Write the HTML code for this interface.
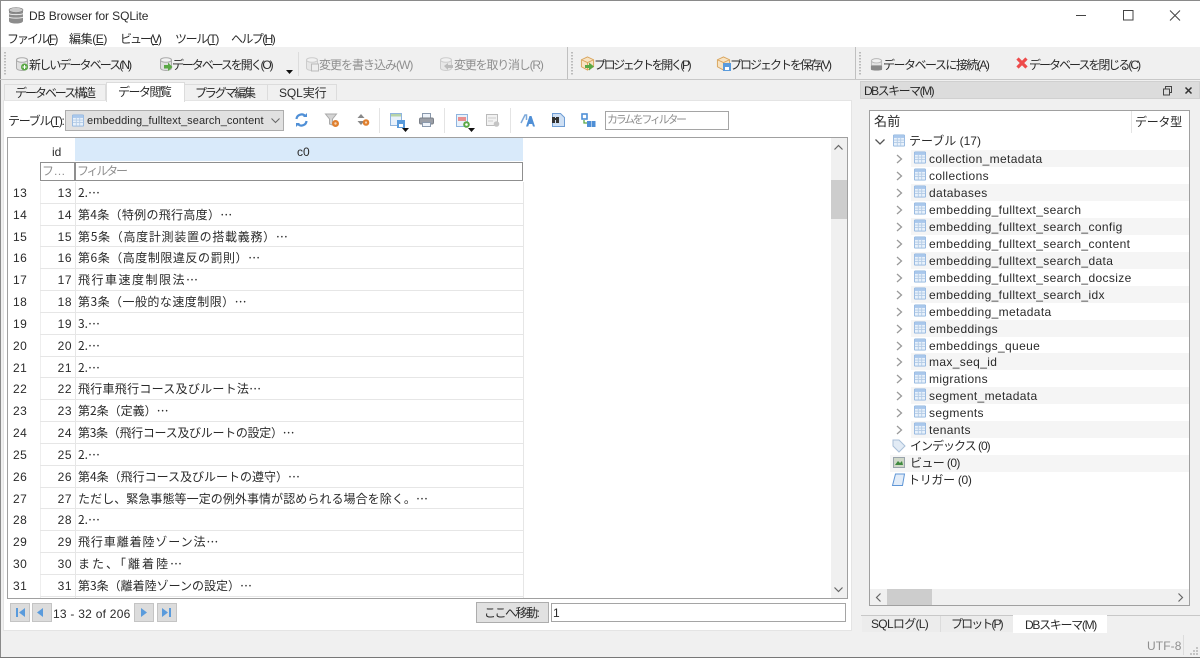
<!DOCTYPE html>
<html lang="ja"><head><meta charset="utf-8"><title>DB Browser for SQLite</title>
<style>
*{box-sizing:border-box}
html,body{margin:0;padding:0}
html{background:#f0f0f0}
body{width:1200px;height:658px;overflow:hidden;position:relative;background:#f0f0f0;font:12px/16px "Liberation Sans","Noto Sans CJK JP",sans-serif;color:#2a2a2a;filter:blur(.3px)}
.a{position:absolute}
.t{position:absolute;white-space:nowrap;line-height:16px}
u{text-underline-offset:1px}
svg{position:absolute;overflow:visible}
.g{color:#8f8f8f}
.r{height:21.84px;position:relative;border-bottom:1px solid #e6e6e6;margin-left:32px;width:484px}
.r b{font-weight:400;position:absolute;left:-27px;top:3px;letter-spacing:.5px}
.r i{font-style:normal;position:absolute;left:0;width:32px;text-align:right;top:3px;letter-spacing:.5px}
.r span{position:absolute;left:38px;top:3px;white-space:nowrap;font-family:"Noto Sans CJK JP",sans-serif}
.tr{position:absolute;left:0;width:100%;height:17px;white-space:nowrap;letter-spacing:.36px;line-height:17px}
.tr.o::before{content:"";position:absolute;left:41px;right:0;top:0;bottom:0;background:#f5f5f5}
.tr span{position:absolute;left:59px;top:1px}
.tr svg.c{left:26px;top:4px}
.tr svg.i{left:44px;top:1px}
.sep{position:absolute;width:1px;background:#dcdcdc}
</style></head><body>
<svg width="0" height="0" style="position:absolute"><defs>
<symbol id="tb" viewBox="0 0 14 14"><rect x=".5" y=".5" width="13" height="13" rx="1" fill="#e8f1fb" stroke="#8fb4de"/><rect x="1" y="1" width="12" height="3" fill="#a9c8ec"/><path d="M1 6.500h12M1 9.200h12M5 4v9M9 4v9" stroke="#b3cbe6" fill="none"/></symbol>
<symbol id="ch" viewBox="0 0 7 10"><path d="M1 1l4.500 4-4.500 4" fill="none" stroke="#9a9a9a" stroke-width="1.300"/></symbol>
<symbol id="db" viewBox="0 0 14 14"><path d="M1.500 3v8c0 1.500 2.500 2.500 5.500 2.500s5.500-1 5.500-2.500V3z" fill="#e0e0e0" stroke="#aaa"/><ellipse cx="7" cy="3" rx="5.500" ry="2.300" fill="#f2f2f2" stroke="#aaa"/></symbol>
<symbol id="box" viewBox="0 0 16 16"><path d="M8 1l6.500 3v7.500L8 15 1.500 11.500V4z" fill="#f7e3c3" stroke="#d9a45c"/><path d="M1.500 4L8 7l6.500-3M8 7v8" fill="none" stroke="#d9a45c"/></symbol>
</defs></svg>

<!-- window frame -->
<div class="a" style="left:0;top:0;width:1200px;height:47px;background:#fff"></div>
<div class="a" style="left:0;top:0;width:1200px;height:1px;background:#8a8a8a"></div>
<div class="a" style="left:0;top:0;width:1px;height:658px;background:#8a8a8a"></div>
<div class="a" style="left:0;top:657px;width:1200px;height:1px;background:#777"></div>

<!-- title -->
<svg style="left:8px;top:7px" width="16" height="17" viewBox="0 0 16 17"><path d="M1 3v11c0 1.500 3 2.500 7 2.500s7-1 7-2.500V3z" fill="#8c8c8c"/><path d="M1 6.500c1 1.500 13 1.500 14 0M1 10c1 1.500 13 1.500 14 0" stroke="#eee" fill="none"/><ellipse cx="8" cy="3" rx="7" ry="2.500" fill="#c9c9c9" stroke="#777" stroke-width=".6"/></svg>
<div class="t" style="left:29px;top:8px;font-size:12px;letter-spacing:-.1px">DB Browser for SQLite</div>
<svg style="left:1076px;top:10px" width="112" height="12" viewBox="0 0 112 12"><path d="M0 5.500h10" stroke="#444"/><rect x="47.500" y=".5" width="9.500" height="9.500" fill="none" stroke="#444"/><path d="M94 .5l10 10M104 .5l-10 10" stroke="#444"/></svg>

<!-- menu -->
<div class="t" style="left:7px;top:31px;letter-spacing:-2px">ファイル(<u>F</u>)</div>
<div class="t" style="left:69px;top:31px;letter-spacing:-.4px">編集(<u>E</u>)</div>
<div class="t" style="left:120px;top:31px;letter-spacing:-2px">ビュー(<u>V</u>)</div>
<div class="t" style="left:175px;top:31px;letter-spacing:-1.4px">ツール(<u>T</u>)</div>
<div class="t" style="left:231px;top:31px;letter-spacing:-1.6px">ヘルプ(<u>H</u>)</div>

<!-- toolbar -->
<div class="a" style="left:0;top:79px;width:1200px;height:1px;background:#c8c8c8"></div>
<div class="a" style="left:4px;top:52px;width:2px;height:24px;background-image:linear-gradient(#bbb 50%,transparent 50%);background-size:2px 3px"></div>
<div class="sep" style="left:298px;top:52px;height:24px"></div>
<div class="sep" style="left:567px;top:47px;height:32px;background:#c0c0c0"></div>
<div class="a" style="left:571px;top:52px;width:2px;height:24px;background-image:linear-gradient(#bbb 50%,transparent 50%);background-size:2px 3px"></div>
<div class="sep" style="left:855px;top:47px;height:32px;background:#c0c0c0"></div>
<div class="a" style="left:859px;top:52px;width:2px;height:24px;background-image:linear-gradient(#bbb 50%,transparent 50%);background-size:2px 3px"></div>

<svg style="left:15px;top:57px" width="14" height="14"><use href="#db"/><circle cx="9.500" cy="10" r="3.500" fill="#5aa845"/><path d="M7.500 10h4M9.500 8v4" stroke="#fff"/></svg>
<div class="t" style="left:29px;top:57px;letter-spacing:-1.9px">新しいデータベース(N)</div>
<svg style="left:159px;top:57px" width="14" height="14"><use href="#db"/><path d="M5 8h4V5.500L13.500 10 9 14v-2.500H5z" fill="#5aa845"/></svg>
<div class="t" style="left:172px;top:57px;letter-spacing:-2.1px">データベースを開く(O)</div>
<svg style="left:286px;top:70px" width="7" height="5"><path d="M0 0h7L3.500 4z" fill="#111"/></svg>
<svg style="left:305px;top:57px;opacity:.5" width="14" height="14"><use href="#db"/><rect x="6.500" y="7" width="7" height="7" fill="#eee" stroke="#888"/></svg>
<div class="t g" style="left:319px;top:57px;letter-spacing:-1px">変更を書き込み(W)</div>
<svg style="left:439px;top:57px;opacity:.5" width="14" height="14"><use href="#db"/><path d="M5 9l4-3v2h5v3H9v2z" fill="#888"/></svg>
<div class="t g" style="left:454px;top:57px;letter-spacing:-1.2px">変更を取り消し(R)</div>
<svg style="left:580px;top:56px" width="15" height="15"><use href="#box"/><path d="M5 9h4V6.500L14 10.500 9 14.500V12H5z" fill="#5aa845"/></svg>
<div class="t" style="left:594px;top:57px;letter-spacing:-2.4px">プロジェクトを開く(P)</div>
<svg style="left:716px;top:56px" width="15" height="15"><use href="#box"/><rect x="7" y="7" width="8" height="8" fill="#5a9bdc"/><rect x="9" y="11" width="4" height="3" fill="#fff"/></svg>
<div class="t" style="left:730px;top:57px;letter-spacing:-2px">プロジェクトを保存(V)</div>
<svg style="left:870px;top:58px" width="13" height="13" viewBox="0 0 14 14"><use href="#db" opacity=".8"/><rect x="1" y="8" width="12" height="5" rx="1" fill="#888"/></svg>
<div class="t" style="left:883px;top:57px;letter-spacing:-1.5px">データベースに接続(A)</div>
<svg style="left:1016px;top:57px" width="12" height="12"><path d="M1.500 1.500l9 9M10.500 1.500l-9 9" stroke="#ee4b4b" stroke-width="3.200"/></svg>
<div class="t" style="left:1029px;top:57px;letter-spacing:-2px">データベースを閉じる(C)</div>

<!-- main tabs -->
<div class="a" style="left:4px;top:84px;width:102px;height:17px;background:#f0f0f0;border:1px solid #dcdcdc"></div>
<div class="a" style="left:184px;top:84px;width:84px;height:17px;background:#f0f0f0;border:1px solid #dcdcdc"></div>
<div class="a" style="left:267px;top:84px;width:70px;height:17px;background:#f0f0f0;border:1px solid #dcdcdc"></div>
<div class="a" style="left:3px;top:100px;width:849px;height:531px;background:#fff;border:1px solid #e4e4e4"></div>
<div class="a" style="left:106px;top:82px;width:79px;height:20px;background:#fff;border:1px solid #dcdcdc;border-bottom:0"></div>
<div class="t" style="left:15px;top:85px;letter-spacing:-2.05px">データベース構造</div>
<div class="t" style="left:118px;top:84px;letter-spacing:-1.55px">データ閲覧</div>
<div class="t" style="left:195px;top:85px;letter-spacing:-2.2px">プラグマ編集</div>
<div class="t" style="left:279px;top:85px;letter-spacing:-.1px">SQL実行</div>

<!-- table toolbar -->
<div class="t" style="left:8px;top:113px;letter-spacing:-1.3px">テーブル(<u>T</u>):</div>
<div class="a" style="left:65px;top:110px;width:219px;height:21px;background:#e1e1e1;border:1px solid #adadad"></div>
<svg style="left:72px;top:114px" width="12" height="13"><use href="#tb" width="12" height="13"/></svg>
<div class="t" style="left:87px;top:113px;font-size:11px;letter-spacing:.09px">embedding_fulltext_search_content</div>
<svg style="left:271px;top:118px" width="9" height="5"><path d="M.5.5l4 4 4-4" fill="none" stroke="#666"/></svg>

<svg style="left:295px;top:113px" width="13" height="14" viewBox="0 0 13 14"><path d="M1.500 6a5 5 0 0 1 9-2.500M11.500 8a5 5 0 0 1-9 2.500" fill="none" stroke="#4f8fd6" stroke-width="2.200"/><path d="M8 4h4V0zM5 10H1v4z" fill="#4f8fd6"/></svg>
<svg style="left:325px;top:113px" width="15" height="15" viewBox="0 0 15 15"><path d="M.5 1h11L7.500 6v6l-3-1V6z" fill="#d4d4d4" stroke="#aaa"/><circle cx="10.500" cy="10.500" r="3.500" fill="#e08030"/><circle cx="10.500" cy="10.500" r="1.200" fill="#f5d5b5"/></svg>
<svg style="left:356px;top:114px" width="14" height="14" viewBox="0 0 14 14"><path d="M5 0l3.500 4h-7zM5 11L1.500 7h7z" fill="#888"/><circle cx="10" cy="8.500" r="3.300" fill="#e08030"/><circle cx="10" cy="8.500" r="1.100" fill="#f5d5b5"/></svg>
<div class="sep" style="left:379px;top:108px;height:25px;background:#e4e4e4"></div>
<svg style="left:390px;top:113px" width="15" height="15" viewBox="0 0 15 15"><rect x=".5" y=".5" width="11" height="12" fill="#e8f1fb" stroke="#8fb4de"/><rect x="1" y="1" width="10" height="2.500" fill="#b6d3a8"/><rect x="7" y="7" width="8" height="8" fill="#5a9bdc"/><rect x="9" y="11" width="4" height="3" fill="#fff"/></svg>
<svg style="left:402px;top:128px" width="7" height="4"><path d="M0 0h7L3.500 4z" fill="#111"/></svg>
<svg style="left:419px;top:113px" width="15" height="14" viewBox="0 0 15 14"><rect x="3.500" y=".5" width="8" height="5" fill="#eef3fa" stroke="#8a99ad"/><rect x=".5" y="5" width="14" height="6" rx="1.500" fill="#9a9ea6" stroke="#7b8088"/><rect x="3.500" y="9.500" width="8" height="4" fill="#eef3fa" stroke="#8a99ad"/></svg>
<div class="sep" style="left:444px;top:108px;height:25px;background:#e4e4e4"></div>
<svg style="left:456px;top:114px" width="15" height="15" viewBox="0 0 15 15"><rect x=".5" y=".5" width="11" height="12" fill="#e8f1fb" stroke="#8fb4de"/><rect x="2" y="3" width="8" height="4" fill="#e98f8f"/><circle cx="10.500" cy="10.500" r="3.300" fill="#5aa845"/><circle cx="10.500" cy="10.500" r="1.300" fill="#fff"/></svg>
<svg style="left:468px;top:128px" width="7" height="4"><path d="M0 0h7L3.500 4z" fill="#111"/></svg>
<svg style="left:486px;top:114px" width="14" height="14" viewBox="0 0 14 14"><rect x=".5" y=".5" width="11" height="11" fill="#f2f2f2" stroke="#bbb"/><path d="M2 4h8M2 7h5" stroke="#ccc"/><circle cx="10.500" cy="10" r="2.800" fill="#c4c4c4"/></svg>
<div class="sep" style="left:510px;top:108px;height:25px;background:#e4e4e4"></div>
<svg style="left:521px;top:114px" width="14" height="13" viewBox="0 0 14 13"><path d="M0 9L4 1h1.500v5" fill="none" stroke="#7da9da" stroke-width="1.500"/><path d="M5 12.500L8.500 2h2l3.500 10.500h-2l-.8-2.500H8l-.8 2.500z" fill="#4f8fd6"/></svg>
<svg style="left:551px;top:113px" width="14" height="14" viewBox="0 0 14 14"><path d="M1.500.5h8l4 4v9h-12z" fill="#cfe0f4" stroke="#6e9dd4"/><rect x="1" y="4" width="3" height="6" fill="#333"/><rect x="5" y="4" width="3" height="6" fill="#333"/><rect x="3.500" y="5" width="2" height="2" fill="#333"/></svg>
<svg style="left:581px;top:113px" width="15" height="15" viewBox="0 0 15 15"><rect x="1" y="1" width="5" height="5" fill="none" stroke="#4f8fd6" stroke-width="1.600"/><rect x="6" y="8" width="4" height="6" fill="#4f8fd6"/><rect x="10.500" y="8" width="4" height="6" fill="#4f8fd6"/><path d="M3 7v3h3" fill="none" stroke="#5aa845" stroke-width="1.300"/></svg>
<div class="a" style="left:605px;top:111px;width:124px;height:19px;background:#fff;border:1px solid #a5a5a5"></div>
<div class="t g" style="left:607px;top:112px;font-size:11px;letter-spacing:-2.3px">カラムをフィルター</div>

<!-- data table -->
<div class="a" style="left:7px;top:137px;width:841px;height:462px;background:#fff;border:1px solid #a0a0a0;overflow:hidden">
 <div class="a" style="left:67px;top:0;width:448px;height:23px;background:#d9eafa"></div>
 <div class="t" style="left:44px;top:6px">id</div>
 <div class="t" style="left:289px;top:6px">c0</div>
 <div class="a" style="left:32px;top:24px;width:35px;height:19px;border:1px solid #8f8f8f"></div>
 <div class="a" style="left:67px;top:24px;width:448px;height:19px;border:1px solid #8f8f8f"></div>
 <div class="t g" style="left:34px;top:25px;letter-spacing:-.5px">フ…</div>
 <div class="t g" style="left:69px;top:25px;letter-spacing:-2.2px">フィルター</div>
 <div class="a" style="left:32px;top:44px;width:1px;height:420px;background:#eee"></div>
 <div class="a" style="left:67px;top:44px;width:1px;height:420px;background:#e6e6e6"></div>
 <div class="a" style="left:515px;top:44px;width:1px;height:420px;background:#e6e6e6"></div>
 <div class="a" style="left:0;top:44px;width:520px">
  <div class="r"><b>13</b><i>13</i><span>2.…</span></div>
  <div class="r"><b>14</b><i>14</i><span style="letter-spacing:.3px">第4条（特例の飛行高度）…</span></div>
  <div class="r"><b>15</b><i>15</i><span style="letter-spacing:.7px">第5条（高度計測装置の搭載義務）…</span></div>
  <div class="r"><b>16</b><i>16</i><span style="letter-spacing:.53px">第6条（高度制限違反の罰則）…</span></div>
  <div class="r"><b>17</b><i>17</i><span style="letter-spacing:1.5px">飛行車速度制限法…</span></div>
  <div class="r"><b>18</b><i>18</i><span style="letter-spacing:.46px">第3条（一般的な速度制限）…</span></div>
  <div class="r"><b>19</b><i>19</i><span>3.…</span></div>
  <div class="r"><b>20</b><i>20</i><span>2.…</span></div>
  <div class="r"><b>21</b><i>21</i><span>2.…</span></div>
  <div class="r"><b>22</b><i>22</i><span style="letter-spacing:.27px">飛行車飛行コース及びルート法…</span></div>
  <div class="r"><b>23</b><i>23</i><span>第2条（定義）…</span></div>
  <div class="r"><b>24</b><i>24</i><span style="letter-spacing:-.3px">第3条（飛行コース及びルートの設定）…</span></div>
  <div class="r"><b>25</b><i>25</i><span>2.…</span></div>
  <div class="r"><b>26</b><i>26</i><span>第4条（飛行コース及びルートの遵守）…</span></div>
  <div class="r"><b>27</b><i>27</i><span style="letter-spacing:.07px">ただし、緊急事態等一定の例外事情が認められる場合を除く。…</span></div>
  <div class="r"><b>28</b><i>28</i><span>2.…</span></div>
  <div class="r"><b>29</b><i>29</i><span style="letter-spacing:.9px">飛行車離着陸ゾーン法…</span></div>
  <div class="r"><b>30</b><i>30</i><span style="letter-spacing:2px">また、「離着陸…</span></div>
  <div class="r"><b>31</b><i>31</i><span>第3条（離着陸ゾーンの設定）…</span></div>
 </div>
 <div class="a" style="left:823px;top:0;width:16px;height:460px;background:#f0f0f0"></div>
 <div class="a" style="left:823px;top:42px;width:16px;height:39px;background:#cdcdcd"></div>
 <svg style="left:826px;top:7px" width="9" height="5"><path d="M.5 4.500l4-4 4 4" fill="none" stroke="#666" stroke-width="1.200"/></svg>
 <svg style="left:826px;top:449px" width="9" height="5"><path d="M.5.5l4 4 4-4" fill="none" stroke="#666" stroke-width="1.200"/></svg>
</div>

<!-- nav -->
<div class="a" style="left:10px;top:603px;width:20px;height:19px;background:#dcdcdc;border:1px solid #c4c4c4"></div>
<div class="a" style="left:32px;top:603px;width:20px;height:19px;background:#dcdcdc;border:1px solid #c4c4c4"></div>
<div class="a" style="left:134px;top:603px;width:20px;height:19px;background:#dcdcdc;border:1px solid #c4c4c4"></div>
<div class="a" style="left:157px;top:603px;width:20px;height:19px;background:#dcdcdc;border:1px solid #c4c4c4"></div>
<svg style="left:14px;top:607px" width="160" height="11" viewBox="0 0 160 11"><path d="M2 1h2v9H2zM11 1v9L5 5.500z" fill="#5a9bdc"/><path d="M29 1v9l-6-4.500z" fill="#5a9bdc"/><path d="M127 1v9l6-4.500z" fill="#5a9bdc"/><path d="M148 1v9l6-4.500zM155 1h2v9h-2z" fill="#5a9bdc"/></svg>
<div class="t" style="left:53px;top:606px;letter-spacing:.25px">13 - 32 of 206</div>
<div class="a" style="left:476px;top:602px;width:73px;height:21px;background:#e1e1e1;border:1px solid #adadad"></div>
<div class="t" style="left:484px;top:605px;letter-spacing:-1.5px">ここへ移動:</div>
<div class="a" style="left:551px;top:603px;width:295px;height:19px;background:#fff;border:1px solid #a5a5a5"></div>
<div class="t" style="left:553px;top:605px">1</div>

<!-- dock title -->
<div class="a" style="left:860px;top:81px;width:340px;height:18px;background:#dcdcdc;border:1px solid #d0d0d0"></div>
<div class="t" style="left:864px;top:83px;letter-spacing:-1.5px">DBスキーマ(M)</div>
<svg style="left:1163px;top:86px" width="32" height="10" viewBox="0 0 32 10"><rect x="2.500" y=".5" width="6" height="6" fill="none" stroke="#444"/><rect x=".5" y="3" width="6" height="6" fill="#dcdcdc" stroke="#444"/><path d="M22.500 1.500l6 6M28.500 1.500l-6 6" stroke="#333" stroke-width="1.500"/></svg>

<!-- tree -->
<div class="a" style="left:869px;top:110px;width:321px;height:496px;background:#fff;border:1px solid #a0a0a0;overflow:hidden">
 <div class="t" style="left:4px;top:3px;font-size:13px;letter-spacing:.3px">名前</div>
 <div class="a" style="left:261px;top:0;width:1px;height:22px;background:#e4e4e4"></div>
 <div class="t" style="left:265px;top:3px;letter-spacing:-.3px">データ型</div>
 <div class="a" style="left:0;top:22px;width:319px;height:456px">
  <div class="tr" style="top:0;letter-spacing:0"><svg style="left:5px;top:6px" width="10" height="6"><path d="M.5.500l4.500 4.500 4.500-4.500" fill="none" stroke="#555" stroke-width="1.300"/></svg><svg class="i" style="left:23px" width="12" height="13"><use href="#tb" width="12" height="13"/></svg><span style="left:39px;top:0">テーブル (17)</span></div>
  <div class="tr o" style="top:17px"><svg class="c" width="7" height="10"><use href="#ch"/></svg><svg class="i" width="12" height="13"><use href="#tb" width="12" height="13"/></svg><span>collection_metadata</span></div>
  <div class="tr" style="top:34px"><svg class="c" width="7" height="10"><use href="#ch"/></svg><svg class="i" width="12" height="13"><use href="#tb" width="12" height="13"/></svg><span>collections</span></div>
  <div class="tr o" style="top:51px"><svg class="c" width="7" height="10"><use href="#ch"/></svg><svg class="i" width="12" height="13"><use href="#tb" width="12" height="13"/></svg><span>databases</span></div>
  <div class="tr" style="top:68px"><svg class="c" width="7" height="10"><use href="#ch"/></svg><svg class="i" width="12" height="13"><use href="#tb" width="12" height="13"/></svg><span>embedding_fulltext_search</span></div>
  <div class="tr o" style="top:85px"><svg class="c" width="7" height="10"><use href="#ch"/></svg><svg class="i" width="12" height="13"><use href="#tb" width="12" height="13"/></svg><span>embedding_fulltext_search_config</span></div>
  <div class="tr" style="top:102px"><svg class="c" width="7" height="10"><use href="#ch"/></svg><svg class="i" width="12" height="13"><use href="#tb" width="12" height="13"/></svg><span>embedding_fulltext_search_content</span></div>
  <div class="tr o" style="top:119px"><svg class="c" width="7" height="10"><use href="#ch"/></svg><svg class="i" width="12" height="13"><use href="#tb" width="12" height="13"/></svg><span>embedding_fulltext_search_data</span></div>
  <div class="tr" style="top:136px"><svg class="c" width="7" height="10"><use href="#ch"/></svg><svg class="i" width="12" height="13"><use href="#tb" width="12" height="13"/></svg><span>embedding_fulltext_search_docsize</span></div>
  <div class="tr o" style="top:153px"><svg class="c" width="7" height="10"><use href="#ch"/></svg><svg class="i" width="12" height="13"><use href="#tb" width="12" height="13"/></svg><span>embedding_fulltext_search_idx</span></div>
  <div class="tr" style="top:170px"><svg class="c" width="7" height="10"><use href="#ch"/></svg><svg class="i" width="12" height="13"><use href="#tb" width="12" height="13"/></svg><span>embedding_metadata</span></div>
  <div class="tr o" style="top:187px"><svg class="c" width="7" height="10"><use href="#ch"/></svg><svg class="i" width="12" height="13"><use href="#tb" width="12" height="13"/></svg><span>embeddings</span></div>
  <div class="tr" style="top:204px"><svg class="c" width="7" height="10"><use href="#ch"/></svg><svg class="i" width="12" height="13"><use href="#tb" width="12" height="13"/></svg><span>embeddings_queue</span></div>
  <div class="tr o" style="top:220px"><svg class="c" width="7" height="10"><use href="#ch"/></svg><svg class="i" width="12" height="13"><use href="#tb" width="12" height="13"/></svg><span>max_seq_id</span></div>
  <div class="tr" style="top:237px"><svg class="c" width="7" height="10"><use href="#ch"/></svg><svg class="i" width="12" height="13"><use href="#tb" width="12" height="13"/></svg><span>migrations</span></div>
  <div class="tr o" style="top:254px"><svg class="c" width="7" height="10"><use href="#ch"/></svg><svg class="i" width="12" height="13"><use href="#tb" width="12" height="13"/></svg><span>segment_metadata</span></div>
  <div class="tr" style="top:271px"><svg class="c" width="7" height="10"><use href="#ch"/></svg><svg class="i" width="12" height="13"><use href="#tb" width="12" height="13"/></svg><span>segments</span></div>
  <div class="tr o" style="top:288px"><svg class="c" width="7" height="10"><use href="#ch"/></svg><svg class="i" width="12" height="13"><use href="#tb" width="12" height="13"/></svg><span>tenants</span></div>
  <div class="tr" style="top:305px;letter-spacing:-1px"><svg style="left:22px;top:1px" width="14" height="14" viewBox="0 0 14 14"><path d="M1 1h6l6 6-6 6-6-6z" fill="#e2ebf5" stroke="#a9bfd8"/></svg><span style="left:40px;top:0">インデックス (0)</span></div>
  <div class="tr" style="top:322px;letter-spacing:-.6px"><div class="a" style="left:20px;right:0;top:0;bottom:0;background:#f5f5f5"></div><svg style="left:23px;top:2px" width="12" height="11" viewBox="0 0 12 11"><rect x=".5" y=".5" width="11" height="10" fill="#cfd8c8" stroke="#9aa4ac"/><path d="M2 8l3-4 2 2 2-2 1 4z" fill="#3f8a3f"/></svg><span style="left:40px;top:0">ビュー (0)</span></div>
  <div class="tr" style="top:339px;letter-spacing:-.3px"><svg style="left:22px;top:1px" width="13" height="14" viewBox="0 0 13 14"><path d="M3.500 1h9l-2 11.500H.5z" fill="#e2ecf8" stroke="#5f96d6"/></svg><span style="left:38px;top:0">トリガー (0)</span></div>
 </div>
 <div class="a" style="left:0;top:478px;width:319px;height:16px;background:#f0f0f0"></div>
 <div class="a" style="left:17px;top:478px;width:45px;height:16px;background:#cdcdcd"></div>
 <svg style="left:6px;top:482px" width="5" height="9"><path d="M4.500.5l-4 4 4 4" fill="none" stroke="#666" stroke-width="1.200"/></svg>
 <svg style="left:308px;top:482px" width="5" height="9"><path d="M.5.5l4 4-4 4" fill="none" stroke="#666" stroke-width="1.200"/></svg>
</div>

<!-- dock tabs -->
<div class="a" style="left:861px;top:615px;width:339px;height:1px;background:#c8c8c8"></div>
<div class="a" style="left:862px;top:616px;width:79px;height:16px;background:#ececec;border-right:1px solid #dcdcdc"></div>
<div class="a" style="left:941px;top:616px;width:72px;height:16px;background:#ececec"></div>
<div class="a" style="left:1013px;top:615px;width:94px;height:18px;background:#fff"></div>
<div class="t" style="left:871px;top:616px;letter-spacing:-.7px">SQLログ(L)</div>
<div class="t" style="left:951px;top:616px;letter-spacing:-1.9px">プロット(P)</div>
<div class="t" style="left:1025px;top:617px;letter-spacing:-1.3px">DBスキーマ(M)</div>

<!-- status -->
<div class="t g" style="left:1147px;top:638px;letter-spacing:.1px">UTF-8</div>
<div class="sep" style="left:1183px;top:635px;height:20px"></div>
<svg style="left:1190px;top:647px" width="9" height="9"><path d="M6 0h2v2H6zM3 3h2v2H3zM6 3h2v2H6zM0 6h2v2H0zM3 6h2v2H3zM6 6h2v2H6z" fill="#c4c4c4"/></svg>
</body></html>
